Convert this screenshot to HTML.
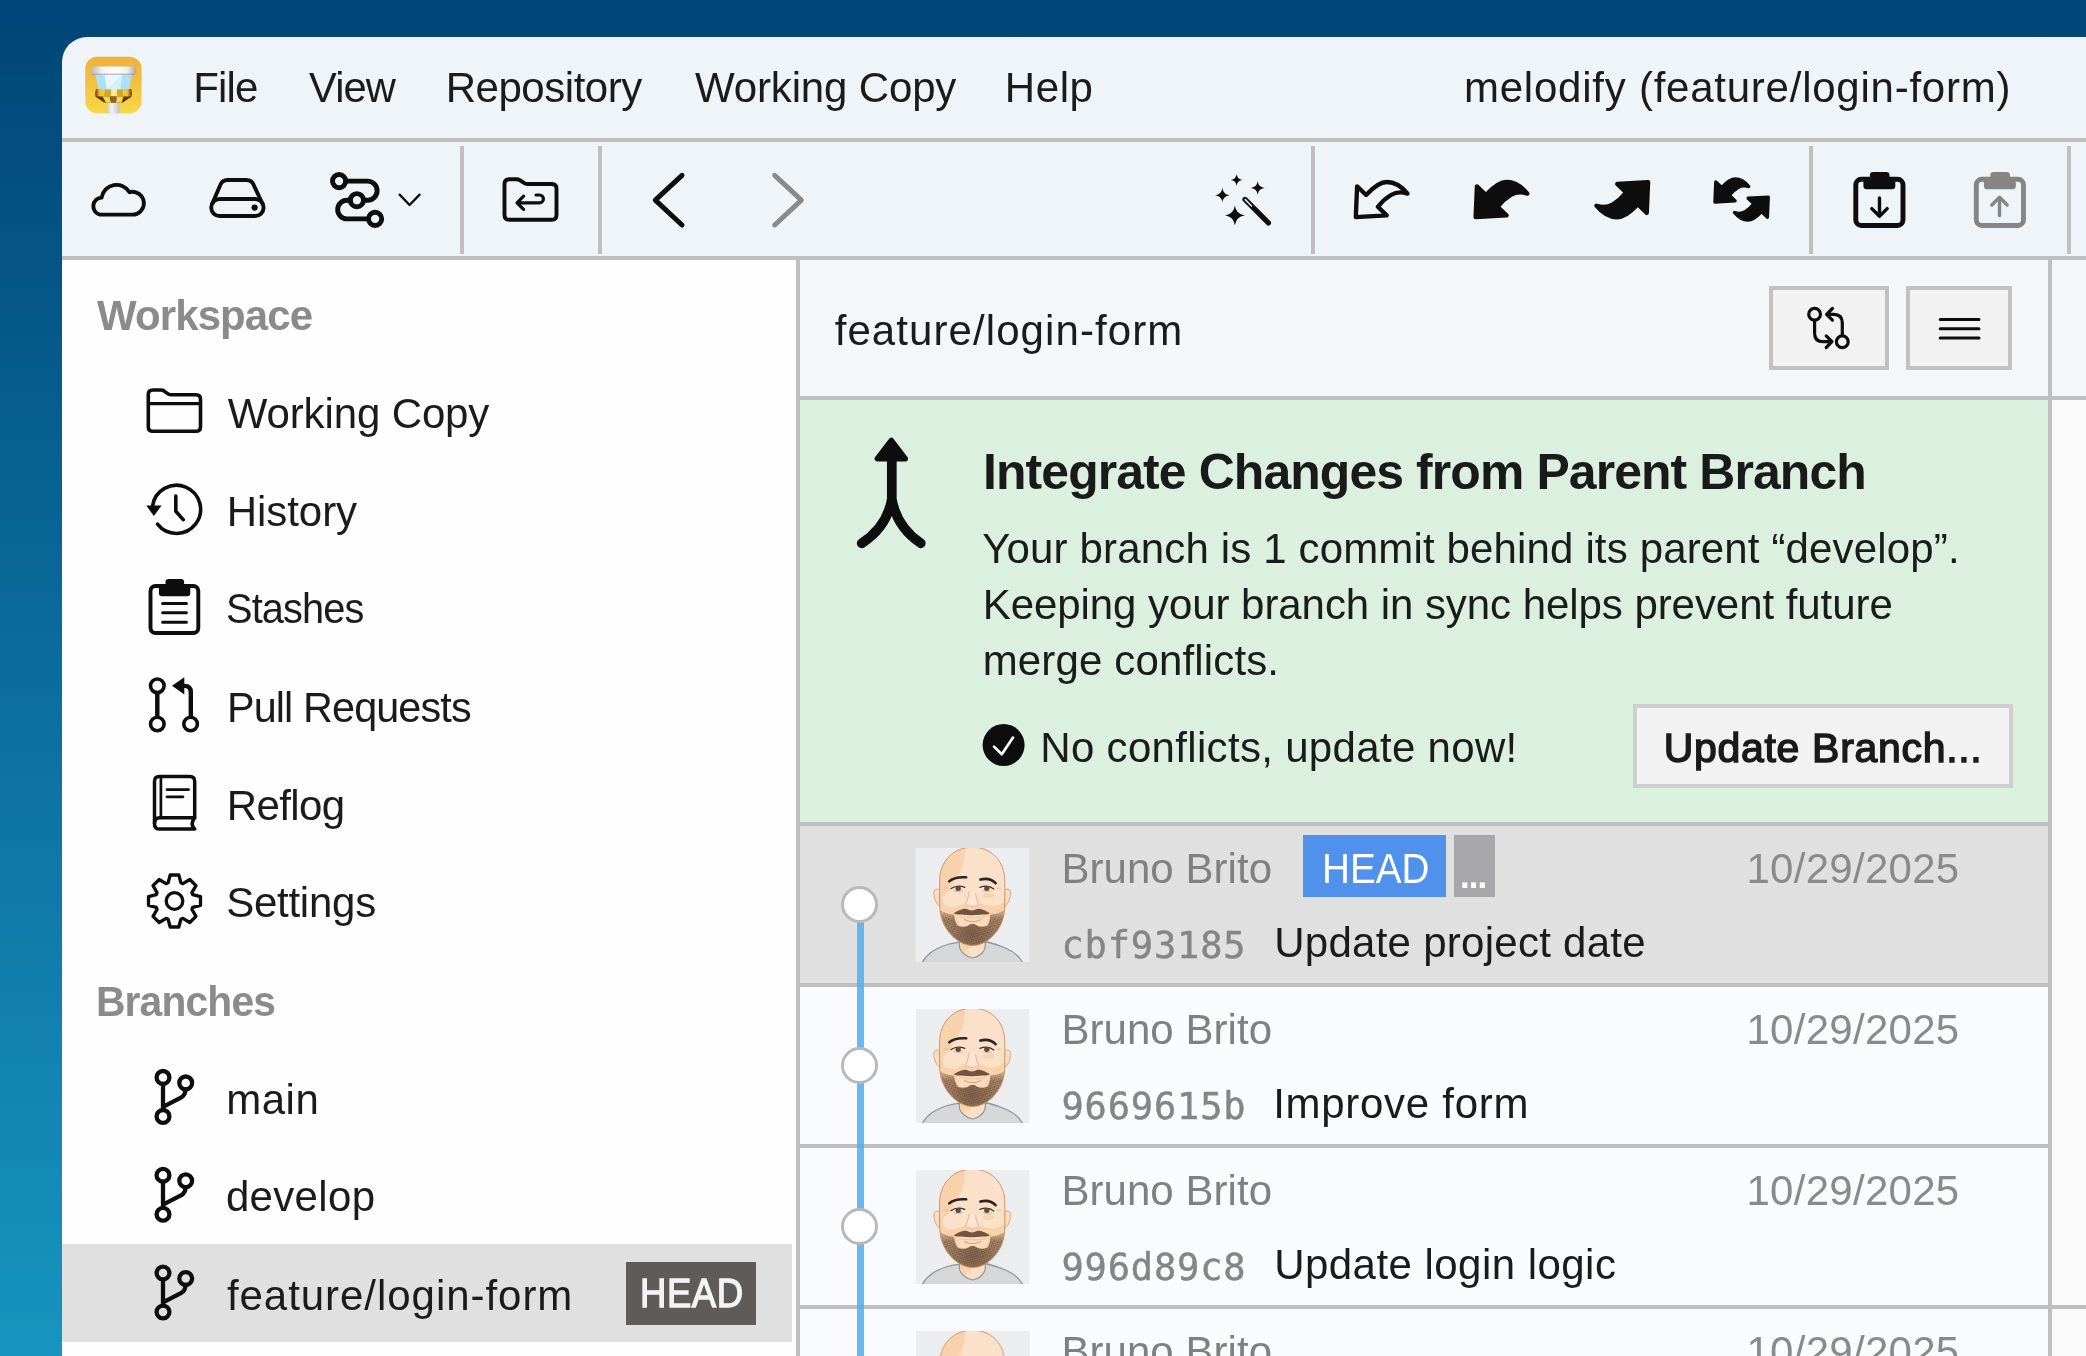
<!DOCTYPE html>
<html lang="en">
<head>
<meta charset="utf-8">
<title>Tower - melodify (feature/login-form)</title>
<style>
html,body{margin:0;padding:0;}
body{width:2086px;height:1356px;overflow:hidden;position:relative;background:linear-gradient(180deg,#00467a 0px,#004878 40px,#0a6a9b 620px,#1794bf 1356px);font-family:'Liberation Sans',sans-serif;color:#1b1b1b;}
#win{position:absolute;left:62px;top:37px;width:2100px;height:1400px;border-top-left-radius:25px;overflow:hidden;background:#eff4f8;}
#in{position:absolute;left:-62px;top:-37px;width:2086px;height:1356px;will-change:transform;}
.b{position:absolute;}
.ln{position:absolute;background:#bfbfbf;}
.t{position:absolute;white-space:pre;transform-origin:0 50%;}
svg{position:absolute;overflow:visible;}
.s{fill:none;stroke:#0d0d0d;stroke-linecap:round;stroke-linejoin:round;}
.f{fill:#0d0d0d;stroke:none;}
</style>
</head>
<body>
<div id="win"><div id="in">

<!-- panels -->
<div class="b" style="left:62px;top:260px;width:734px;height:1096px;background:#fefefe"></div>
<div class="b" style="left:62px;top:1244.2px;width:730.4px;height:97.4px;background:#e0e0e0"></div>
<div class="b" style="left:800px;top:260px;width:1286px;height:136px;background:#f5f6f8"></div>
<div class="b" style="left:800px;top:400px;width:1248px;height:422px;background:#dbf0de"></div>
<div class="b" style="left:2052px;top:400px;width:34px;height:956px;background:#fafafa"></div>
<!-- rows -->
<div class="b" style="left:800px;top:826px;width:1248px;height:157px;background:#e0e0e0"></div>
<div class="b" style="left:800px;top:987px;width:1248px;height:157px;background:#fafbfd"></div>
<div class="b" style="left:800px;top:1148px;width:1248px;height:157px;background:#fafbfd"></div>
<div class="b" style="left:800px;top:1309px;width:1248px;height:47px;background:#fafbfd"></div>
<!-- lines -->
<div class="ln" style="left:62px;top:138px;width:2024px;height:4px"></div>
<div class="ln" style="left:62px;top:256px;width:2024px;height:4px"></div>
<div class="ln" style="left:796px;top:260px;width:4px;height:1096px"></div>
<div class="ln" style="left:2048px;top:260px;width:4px;height:1096px"></div>
<div class="ln" style="left:800px;top:396px;width:1286px;height:4px"></div>
<div class="ln" style="left:800px;top:822px;width:1248px;height:4px"></div>
<div class="ln" style="left:800px;top:983px;width:1248px;height:4px"></div>
<div class="ln" style="left:800px;top:1144px;width:1248px;height:4px"></div>
<div class="ln" style="left:800px;top:1305px;width:1286px;height:4px"></div>
<!-- toolbar separators -->
<div class="ln" style="left:459.5px;top:146px;width:4px;height:107.5px"></div>
<div class="ln" style="left:597.5px;top:146px;width:4px;height:107.5px"></div>
<div class="ln" style="left:1310.7px;top:146px;width:4px;height:107.5px"></div>
<div class="ln" style="left:1808.6px;top:146px;width:4px;height:107.5px"></div>
<div class="ln" style="left:2066.6px;top:146px;width:4px;height:107.5px"></div>

<!-- header buttons -->
<div class="b" style="left:1768.5px;top:286px;width:112px;height:76px;border:4px solid #c1c1c1;background:#f2f2f2"></div>
<div class="b" style="left:1906.4px;top:286px;width:98px;height:76px;border:4px solid #c1c1c1;background:#f2f2f2"></div>
<!-- update button -->
<div class="b" style="left:1633px;top:704px;width:372px;height:76px;border:4px solid #cfcfcf;background:#f2f2f2"></div>
<!-- badges -->
<div class="b" style="left:626px;top:1262px;width:130px;height:63px;background:#5f5b59"></div>
<div class="b" style="left:1303px;top:835px;width:143px;height:62px;background:#5091eb"></div>
<div class="b" style="left:1453.5px;top:835px;width:41px;height:62px;background:#a8a8aa"></div>

<!-- graph line & nodes -->
<div class="b" style="left:857px;top:904px;width:7px;height:452px;background:rgba(84,170,236,.85)"></div>
<div class="b" style="left:841px;top:885.5px;width:31px;height:31px;border-radius:50%;border:3.5px solid #b9b9b9;background:#fff"></div>
<div class="b" style="left:841px;top:1046.5px;width:31px;height:31px;border-radius:50%;border:3.5px solid #b9b9b9;background:#fff"></div>
<div class="b" style="left:841px;top:1207.5px;width:31px;height:31px;border-radius:50%;border:3.5px solid #b9b9b9;background:#fff"></div>

<svg width="2086" height="1356" viewBox="0 0 2086 1356" style="left:0;top:0">
<defs><linearGradient id="gI" x1="0" y1="0" x2="0" y2="1"><stop offset="0" stop-color="#eeb03d"/><stop offset="1" stop-color="#f7d747"/></linearGradient><linearGradient id="gD" x1="0" y1="0" x2="1" y2="0"><stop offset="0" stop-color="#b9b9b9"/><stop offset=".25" stop-color="#f4f4f4"/><stop offset=".55" stop-color="#ffffff"/><stop offset=".8" stop-color="#efefef"/><stop offset="1" stop-color="#a9a9a9"/></linearGradient><linearGradient id="gS" x1="0" y1="0" x2="1" y2="0"><stop offset="0" stop-color="#c4c4c4"/><stop offset=".4" stop-color="#f2f2f2"/><stop offset="1" stop-color="#bdbdbd"/></linearGradient><linearGradient id="gG" x1="0" y1="0" x2="1" y2="0"><stop offset="0" stop-color="#6a2a08"/><stop offset=".12" stop-color="#f0b92c"/><stop offset=".3" stop-color="#f8d64a"/><stop offset=".5" stop-color="#fff0a0"/><stop offset=".7" stop-color="#f8d64a"/><stop offset=".88" stop-color="#f0b92c"/><stop offset="1" stop-color="#6a2a08"/></linearGradient></defs>
<g><rect x="85.2" y="56.8" width="56.4" height="56.5" rx="12" fill="url(#gI)"/><path d="M106.2,102 L120.2,102 L119,113.5 L107.8,113.5 Z" fill="url(#gS)"/><path d="M95.2,74 L132,74 L129,89.5 L98.8,89.5 Z" fill="#a9e1fb"/><path d="M104.5,74 L122.5,74 L120.5,89.5 L107,89.5 Z" fill="#d3f0fc"/><path d="M104.5,74 L122.5,74 L107,89.5 Z" fill="#e9f8fe"/><path d="M96,89 L131.3,89 Q132.5,93 131.5,96.5 L123,102.6 L104,102.6 L95.5,96.5 Q94.5,93 96,89 Z" fill="url(#gG)"/><path d="M95.5,96.5 L131.5,96.5 L123,102.6 L104,102.6 Z" fill="#3c1503" opacity=".8"/><path d="M102.5,96.5 L109.5,96.5 L111,102.6 L106,102.6 Z M116.5,96.5 L123.5,96.5 L121.5,102.6 L116,102.6 Z" fill="#f8d64a"/><path d="M110,96.5 L116.5,96.5 L116,102.6 L111,102.6 Z" fill="#8a6a12"/><path d="M105,89.5 L111,89.5 L111,96.5 L104,96.5 Z M117,89.5 L122.5,89.5 L123.5,96.5 L117,96.5 Z" fill="#c99a1c" opacity=".8"/><rect x="91.2" y="66.6" width="44.8" height="8.4" rx="3.6" fill="url(#gD)"/><rect x="92" y="73.6" width="43" height="1.4" fill="#8d8d8d" opacity=".55"/></g>
<path class="s" stroke-width="3.9" d="M100.1,214.6 H131.5 A11.4,11.4 0 1 0 129.6,192.2 A15.2,15.2 0 0 0 101.6,197.6 A8.6,8.6 0 0 0 100.1,214.6 Z"/>
<g class="s" stroke-width="3.9"><rect x="211.2" y="199" width="52.4" height="17" rx="8.5"/><path d="M212.4,203.5 L220.3,185 Q222.3,180 227.5,180 H246.5 Q251.7,180 253.7,185 L262.4,203.5"/></g><circle class="f" cx="254.6" cy="207.6" r="3.1"/>
<g class="s" stroke-width="4.9"><circle cx="339.1" cy="181.1" r="6.6"/><circle cx="356.9" cy="200.2" r="6.6"/><circle cx="375.1" cy="218.9" r="6.6"/><path d="M345.8,181.1 H367.6 A9.55,9.55 0 0 1 367.6,200.2 H363.6 M350.2,200.2 H347 A9.35,9.35 0 0 0 347,218.9 H368.4"/></g>
<path class="s" stroke-width="2.3" d="M399.6,194.6 L409.6,205 L419.6,194.6"/>
<g class="s"><path stroke-width="3.9" d="M504.5,184 Q504.5,179.2 509.3,179.2 H516.4 Q518.3,179.2 519.8,180.2 L524.3,183.2 Q525.6,184 527,184 H551.7 Q556.5,184 556.5,188.8 V215 Q556.5,219.8 551.7,219.8 H509.3 Q504.5,219.8 504.5,215 Z"/><path stroke-width="3.2" d="M518,202.8 H539.5 A3.9,3.9 0 0 0 539.5,195 H536 M523.6,196.2 L517,202.8 L523.6,209.4"/></g>
<path class="s" stroke-width="5" d="M682,175.3 L655.3,200.1 L682,225"/>
<path class="s" stroke-width="5" style="stroke:#8a8a8a" d="M774.7,175.3 L801.4,200.1 L774.7,225"/>
<g class="f"><path d="M1236.6,174.1 Q1237.2,179.4 1242.5,180 Q1237.2,180.6 1236.6,185.9 Q1236.0,180.6 1230.6999999999998,180 Q1236.0,179.4 1236.6,174.1 Z"/><path d="M1257.7,181.1 Q1258.4,187.2 1264.5,187.9 Q1258.4,188.6 1257.7,194.70000000000002 Q1257.0,188.6 1250.9,187.9 Q1257.0,187.2 1257.7,181.1 Z"/><path d="M1222.4,188.10000000000002 Q1223.2,194.5 1229.6000000000001,195.3 Q1223.2,196.1 1222.4,202.5 Q1221.6,196.1 1215.2,195.3 Q1221.6,194.5 1222.4,188.10000000000002 Z"/><path d="M1234.9,205.5 Q1236.0,214.3 1244.8000000000002,215.4 Q1236.0,216.5 1234.9,225.3 Q1233.8,216.5 1225.0,215.4 Q1233.8,214.3 1234.9,205.5 Z"/></g>
<path class="s" stroke-width="5.2" d="M1245,199.4 L1268.4,222.9"/><path d="M1245.3,199.7 L1251.5,206" stroke="#d9dde2" stroke-width="1.7" stroke-linecap="round"/>
<path d="M3.6,6.3 L12.6,15 C19.5,7.5 26.5,2 33.5,2 C42,2 49,7.5 54,13.6 C48,11.6 42.5,12 37.5,15 C32,18.3 27.5,22.8 24.3,26.8 L33.2,35.4 L2.3,37.1 Z" class="s" stroke-width="4.3" transform="translate(1353.5,180)"/>
<path d="M3.6,6.3 L12.6,15 C19.5,7.5 26.5,2 33.5,2 C42,2 49,7.5 54,13.6 C48,11.6 42.5,12 37.5,15 C32,18.3 27.5,22.8 24.3,26.8 L33.2,35.4 L2.3,37.1 Z" class="s" stroke-width="4.3" style="fill:#0d0d0d" transform="translate(1473.3,180)"/>
<path d="M3.6,6.3 L12.6,15 C19.5,7.5 26.5,2 33.5,2 C42,2 49,7.5 54,13.6 C48,11.6 42.5,12 37.5,15 C32,18.3 27.5,22.8 24.3,26.8 L33.2,35.4 L2.3,37.1 Z" class="s" stroke-width="4.3" style="fill:#0d0d0d" transform="translate(1650.4,219.3) rotate(180)"/>
<path d="M3.6,6.3 L12.6,15 C19.5,7.5 26.5,2 33.5,2 C42,2 49,7.5 54,13.6 C48,11.6 42.5,12 37.5,15 C32,18.3 27.5,22.8 24.3,26.8 L33.2,35.4 L2.3,37.1 Z" class="s" stroke-width="5" style="fill:#0d0d0d" transform="translate(1713.4,177.7) scale(.655)"/>
<path d="M3.6,6.3 L12.6,15 C19.5,7.5 26.5,2 33.5,2 C42,2 49,7.5 54,13.6 C48,11.6 42.5,12 37.5,15 C32,18.3 27.5,22.8 24.3,26.8 L33.2,35.4 L2.3,37.1 Z" class="s" stroke-width="5" style="fill:#0d0d0d" transform="translate(1769.8,221.4) rotate(180) scale(.655)"/>
<g transform="translate(0,0)" stroke="#0d0d0d" fill="none" stroke-linecap="round" stroke-linejoin="round"><rect x="1855.8" y="179.3" width="47.2" height="46.2" rx="5.5" stroke-width="4.9"/><path d="M1873,172.1 H1886.4 Q1889.5,172.1 1889.5,175.2 V177 H1892.3 Q1895.3,177 1895.3,180 V186 Q1895.3,189.3 1892,189.3 H1866.7 Q1863.4,189.3 1863.4,186 V180 Q1863.4,177 1866.4,177 H1869.9 V175.2 Q1869.9,172.1 1873,172.1 Z" fill="#0d0d0d" stroke="none"/><path stroke-width="3.4" d="M1879.5,198 V215.6 M1871.8,208.6 L1879.5,216.3 L1887.2,208.6"/></g>
<g transform="translate(120.5,0)" stroke="#858585" fill="none" stroke-linecap="round" stroke-linejoin="round"><rect x="1855.8" y="179.3" width="47.2" height="46.2" rx="5.5" stroke-width="4.9"/><path d="M1873,172.1 H1886.4 Q1889.5,172.1 1889.5,175.2 V177 H1892.3 Q1895.3,177 1895.3,180 V186 Q1895.3,189.3 1892,189.3 H1866.7 Q1863.4,189.3 1863.4,186 V180 Q1863.4,177 1866.4,177 H1869.9 V175.2 Q1869.9,172.1 1873,172.1 Z" fill="#858585" stroke="none"/><path stroke-width="3.4" d="M1879,215.6 V198.5 M1871.3,205 L1879,197.3 L1886.7,205"/></g>
<g class="s" stroke-width="3.6"><path d="M148.3,394.6 Q148.3,390 152.9,390 H160.7 Q162.6,390 164.2,391.1 L167.6,393.6 Q169,394.7 170.8,394.7 H195.9 Q200.5,394.7 200.5,399.3 V426.7 Q200.5,431.3 195.9,431.3 H152.9 Q148.3,431.3 148.3,426.7 Z"/><path d="M148.5,403.6 H200.5" stroke-width="3.1"/></g>
<g class="s" stroke-width="3.6"><path d="M152.6,506 A24.1,24.1 0 1 1 157.5,524.2"/><path d="M175.8,496 V511.2 L183.2,519.6"/></g><path class="f" d="M146.3,505.6 H161.6 L153.8,516 Z"/>
<g class="s"><rect x="150.5" y="586" width="47.8" height="47" rx="5" stroke-width="3.9"/><path stroke-width="3" d="M162.6,603.4 H186.4 M162.6,612.8 H186.4 M162.6,622.3 H186.4"/></g><path class="f" d="M168.5,578.9 H181.1 Q184.1,578.9 184.1,581.9 V584 H187.3 Q190.3,584 190.3,587 V593.2 Q190.3,596.2 187.3,596.2 H161.9 Q158.9,596.2 158.9,593.2 V587 Q158.9,584 161.9,584 H165.5 V581.9 Q165.5,578.9 168.5,578.9 Z"/>
<g class="s" stroke-width="3.6"><circle cx="157.3" cy="685.8" r="6.8"/><circle cx="157.3" cy="724" r="6.8"/><circle cx="190.6" cy="724" r="6.8"/><path stroke-width="4.4" d="M157.3,693.2 V716.6 M190.8,716.6 V692.2 Q190.8,685.9 184.5,685.9 H182"/></g><path class="f" d="M172,685.8 L184.3,677.2 V694.4 Z"/>
<g class="s" stroke-width="3.5"><path d="M194.7,817.8 V781.4 Q194.7,776.6 189.9,776.6 H159.3 Q154.5,776.6 154.5,781.4 V823.5"/><path d="M160.9,777 V817.8" stroke-width="2.7"/><path d="M194.7,817.8 H159.7 Q154.5,817.8 154.5,823.4 Q154.5,829.1 159.7,829.1 H194.8 Q189.6,823.6 194.7,817.8 Z"/><path stroke-width="2.7" d="M167,789.6 H188.6 M167,796.8 H183"/></g>
<path class="s" stroke-width="3.3" d="M168.1,882.8 L170.2,875.0 L178.8,875.0 L180.9,882.8 L182.9,883.6 L189.8,879.5 L196.0,885.7 L191.9,892.6 L192.7,894.6 L200.5,896.7 L200.5,905.3 L192.7,907.4 L191.9,909.4 L196.0,916.3 L189.8,922.5 L182.9,918.4 L180.9,919.2 L178.8,927.0 L170.2,927.0 L168.1,919.2 L166.1,918.4 L159.2,922.5 L153.0,916.3 L157.1,909.4 L156.3,907.4 L148.5,905.3 L148.5,896.7 L156.3,894.6 L157.1,892.6 L153.0,885.7 L159.2,879.5 L166.1,883.6 Z"/><circle class="s" stroke-width="3.3" cx="174.5" cy="901" r="8.3"/>
<g transform="translate(154.4,1069)" class="s" stroke-width="4.3"><circle cx="8.6" cy="8.4" r="6.4"/><circle cx="8.6" cy="47.4" r="6.4"/><circle cx="31.3" cy="13.9" r="6.4"/><path d="M8.6,14.8V41 M8.6,37.8 L26.5,28.6 Q31,26.3 31.2,20.3"/></g>
<g transform="translate(154.4,1166.8)" class="s" stroke-width="4.3"><circle cx="8.6" cy="8.4" r="6.4"/><circle cx="8.6" cy="47.4" r="6.4"/><circle cx="31.3" cy="13.9" r="6.4"/><path d="M8.6,14.8V41 M8.6,37.8 L26.5,28.6 Q31,26.3 31.2,20.3"/></g>
<g transform="translate(154.4,1264.6)" class="s" stroke-width="4.3"><circle cx="8.6" cy="8.4" r="6.4"/><circle cx="8.6" cy="47.4" r="6.4"/><circle cx="31.3" cy="13.9" r="6.4"/><path d="M8.6,14.8V41 M8.6,37.8 L26.5,28.6 Q31,26.3 31.2,20.3"/></g>
<g class="s" stroke-width="3.2"><circle cx="1814.6" cy="314.3" r="5.9"/><circle cx="1842.3" cy="341.7" r="5.9"/><path d="M1814.6,320.4 V333.2 Q1814.6,341.7 1823.1,341.7 H1831.6 M1826.2,335.9 L1832,341.7 L1826.2,347.5"/><path d="M1842.3,335.6 V322.8 Q1842.3,314.3 1833.8,314.3 H1827.2 M1832.4,308.5 L1826.6,314.3 L1832.4,320.1"/></g>
<path class="s" stroke-width="3" d="M1940.2,319.6 H1979 M1940.2,328.7 H1979 M1940.2,337.9 H1979"/>
<g class="s" stroke-width="9.7"><path d="M891.8,452 V504 M891.8,499 Q887,527 861.7,543.3 M891.8,499 Q896.6,527 920.8,543.3"/></g><path d="M891.3,440.3 L877.3,458.7 H905.3 Z" fill="#0d0d0d" stroke="#0d0d0d" stroke-width="5.4" stroke-linejoin="round"/>
<circle cx="1003.6" cy="745" r="21" fill="#0d0d0d"/><path d="M994,746.6 L1001.8,754.2 L1013,737.6" fill="none" stroke="#fff" stroke-width="2.7" stroke-linecap="round" stroke-linejoin="round"/>
</svg>
<svg width="2086" height="1356" viewBox="0 0 2086 1356" style="left:0;top:0">
<defs>
<pattern id="stb" width="3.1" height="3.1" patternUnits="userSpaceOnUse" patternTransform="rotate(28)"><rect width="3.1" height="3.1" fill="#a98565"/><circle cx="0.8" cy="0.8" r="0.72" fill="#6f5342"/><circle cx="2.4" cy="2.3" r="0.65" fill="#7d5f4c"/></pattern>
<linearGradient id="bfd" x1="0" y1="0" x2="0" y2="1"><stop offset="0" stop-color="#f8d2ab" stop-opacity=".75"/><stop offset=".28" stop-color="#f8d2ab" stop-opacity="0"/></linearGradient>
<radialGradient id="bdk" cx="57" cy="86" r="26" gradientUnits="userSpaceOnUse"><stop offset="0" stop-color="#5e4535" stop-opacity=".55"/><stop offset="1" stop-color="#5e4535" stop-opacity="0"/></radialGradient>
<clipPath id="avc"><rect x="0" y="0" width="114" height="114"/></clipPath>
<g id="av" clip-path="url(#avc)">
<rect width="114" height="114" fill="#ebedef"/>
<path d="M6.5,115 C9,110 12.5,106.5 17,103.3 C22,100 28,97.8 32,96.5 C36,95.3 39,94.8 42.5,94.3 L72,94 C78,95.5 84,97.5 91,100.5 C99,104 104,108.5 107.5,115 Z" fill="#d6d7d8" stroke="#8d969d" stroke-width="1.3"/>
<path d="M43.9,90 L43.9,98 C44.3,103.5 50,108.5 57.2,110 C64,108.5 69.3,104 69.8,98 L69.8,90 Z" fill="#fbdfc6" stroke="#8d969d" stroke-width="1.2"/>
<path d="M44.6,94 L44.6,98 C45,101 47,103.5 49,105 C50.5,101 56,98.5 63,97 L63,94 Z" fill="#f8d2ab"/>
<path d="M24.6,42.5 C22.5,40.2 18.6,40.6 18.3,44.5 C18.2,49.5 20.4,55.5 24.2,58.6 Z" fill="#fbdcc0" stroke="#d9a074" stroke-width=".9"/>
<path d="M88.9,42.5 C91,40.2 94.9,40.6 95.2,44.5 C95.3,49.5 93.1,55.5 89.3,58.6 Z" fill="#fbdcc0" stroke="#d9a074" stroke-width=".9"/>
<path d="M57,-0.8 C38,-0.8 24.2,13 24.1,33 C24,42 24,52 24.4,61 C25.2,72 30,82 38.5,89.5 C44.5,94.8 50.5,97.4 57.1,97.4 C63.7,97.4 69.7,94.8 75.6,89.5 C84,82 88.5,72 89.1,61 C89.5,52 89.4,42 89.3,33 C89.2,13 76,-0.8 57,-0.8 Z" fill="#fbe1ca"/>
<clipPath id="hdc"><path d="M57,-0.8 C38,-0.8 24.2,13 24.1,33 C24,42 24,52 24.4,61 C25.2,72 30,82 38.5,89.5 C44.5,94.8 50.5,97.4 57.1,97.4 C63.7,97.4 69.7,94.8 75.6,89.5 C84,82 88.5,72 89.1,61 C89.5,52 89.4,42 89.3,33 C89.2,13 76,-0.8 57,-0.8 Z"/></clipPath>
<g clip-path="url(#hdc)">
<path d="M20,-2 L49,-2 C50.5,8 48,18 43.5,25 C40,30.5 37,35 35.5,41 L30,46 L20,50 Z" fill="#f8d2ab"/>
<path d="M20,44 C26,43 29,45 31,48 C28,52 27,56 31,58.5 C36,60 43,59 48,56 L51.5,57.5 C53,59.5 61,59.5 62.5,57.5 L66,55.5 C72,59 82,59.5 88,54 L95,50 L95,100 L20,100 Z" fill="#f8d2ab"/>
<ellipse cx="37" cy="51.2" rx="10.2" ry="7.2" fill="#fbe1ca"/>
<ellipse cx="73" cy="47.5" rx="6" ry="2.6" fill="#f6cfa6" opacity=".8"/>
<path d="M22,60.5 C27,64.5 33,66.5 38.5,66.8 C39,71 40,74.5 42,77.5 C46,79.5 50,79 53,77.5 C55,75.6 59,75.6 61.2,77.5 C64,79 68,79.5 72.2,77.5 C74,74.5 74.8,71 74.6,66.8 C80,66.5 86,64.5 92,60.5 L92,100 L22,100 Z" fill="url(#stb)"/>
<path d="M22,60.5 C27,64.5 33,66.5 38.5,66.8 C39,71 40,74.5 42,77.5 C46,79.5 50,79 53,77.5 C55,75.6 59,75.6 61.2,77.5 C64,79 68,79.5 72.2,77.5 C74,74.5 74.8,71 74.6,66.8 C80,66.5 86,64.5 92,60.5 L92,100 L22,100 Z" fill="url(#bfd)"/>
<path d="M22,60.5 C27,64.5 33,66.5 38.5,66.8 C39,71 40,74.5 42,77.5 C46,79.5 50,79 53,77.5 C55,75.6 59,75.6 61.2,77.5 C64,79 68,79.5 72.2,77.5 C74,74.5 74.8,71 74.6,66.8 C80,66.5 86,64.5 92,60.5 L92,100 L22,100 Z" fill="url(#bdk)"/>
</g>
<path d="M57,-0.8 C38,-0.8 24.2,13 24.1,33 C24,42 24,52 24.4,61 C25.2,72 30,82 38.5,89.5 C44.5,94.8 50.5,97.4 57.1,97.4 C63.7,97.4 69.7,94.8 75.6,89.5 C84,82 88.5,72 89.1,61 C89.5,52 89.4,42 89.3,33 C89.2,13 76,-0.8 57,-0.8 Z" fill="none" stroke="#c98e63" stroke-width=".9"/>
<path d="M41.5,66.6 C47,68 67,68 72.8,66.6 C72.5,71 71.5,74.5 70,77 C66,78.5 62.5,77.8 60.8,76.6 C58.5,75 55.5,75 53.3,76.6 C51.5,77.8 48,78.5 44.3,77 C42.8,74.5 41.8,71 41.5,66.6 Z" fill="#fbdcc0"/>
<path d="M43.5,68.2 C50,70.2 64,70.2 70.8,68.2" fill="none" stroke="#f4c9a0" stroke-width="1.6"/>
<path d="M48.8,71.4 C53,74.4 61,74.4 65.4,71.4" fill="none" stroke="#c98e63" stroke-width=".8" stroke-linecap="round"/>
<path d="M38,65.3 C41,63.8 45,61.2 48.8,60.8 C52,60.5 54,62.6 56.4,62.6 C58.8,62.6 60.8,60.5 64,60.8 C67.8,61.2 71.5,63.8 74.6,65.3 C72,66.8 69,66.6 66.5,66.4 C60,67.4 52.5,67.4 46,66.4 C43.5,66.6 40.5,66.8 38,65.3 Z" fill="#6e5443"/>
<path d="M53.6,43.5 C53.4,48 51.6,52.5 50.3,55.3 C49.5,57.3 51.4,58.3 53.5,57.7 C55.8,58.7 58.2,58.7 60.4,57.7 C62.4,58.3 63.9,57 62.9,55.2 C61.2,52 60.3,48.5 60.2,45" fill="#fce5d2" stroke="#dfa880" stroke-width=".8" stroke-linejoin="round"/>
<path d="M33.7,33.4 C37,30.2 41.5,28.7 50.7,29.3" fill="none" stroke="#2b2422" stroke-width="2.6" stroke-linecap="round"/>
<path d="M64.9,31.6 C71,29.9 76.5,31.3 80.1,35.2" fill="none" stroke="#2b2422" stroke-width="2.6" stroke-linecap="round"/>
<path d="M35.6,40.6 C39.5,37.7 45,37.6 49.3,39.3" fill="none" stroke="#3a2f2b" stroke-width="1.25" stroke-linecap="round"/>
<path d="M64.4,39.3 C69,37.6 74.5,37.9 78.3,40.9" fill="none" stroke="#3a2f2b" stroke-width="1.25" stroke-linecap="round"/>
<ellipse cx="42.7" cy="40.6" rx="2.7" ry="2.5" fill="#5b4a44"/><ellipse cx="71.3" cy="40.6" rx="2.7" ry="2.5" fill="#5b4a44"/>
<path d="M38,42.6 C41,44.2 45,44 47.5,42.4 M67,42.4 C70,44 74.5,44.2 77,42.8" fill="none" stroke="#d9a983" stroke-width=".7"/>
<path d="M28,39.6 L32.5,40.5 M81.5,40.6 L85.5,39.8" fill="none" stroke="#dcae8a" stroke-width=".7"/>
</g>
</defs>
<use href="#av" x="915.5" y="848"/>
<use href="#av" x="915.5" y="1009"/>
<use href="#av" x="915.5" y="1170"/>
<use href="#av" x="915.5" y="1331"/>
</svg>

<span class="t" style="left:193.3px;top:66.7px;font-size:42px;line-height:42px;letter-spacing:-0.87px;">File</span>
<span class="t" style="left:308.7px;top:66.7px;font-size:42px;line-height:42px;letter-spacing:-0.90px;transform:scaleX(0.9920);">View</span>
<span class="t" style="left:445.7px;top:66.7px;font-size:42px;line-height:42px;letter-spacing:-0.46px;">Repository</span>
<span class="t" style="left:695.0px;top:66.7px;font-size:42px;line-height:42px;letter-spacing:-0.15px;">Working Copy</span>
<span class="t" style="left:1004.7px;top:66.7px;font-size:42px;line-height:42px;letter-spacing:0.63px;">Help</span>
<span class="t" style="left:1464.0px;top:66.9px;font-size:42px;line-height:42px;letter-spacing:0.76px;">melodify (feature/login-form)</span>
<span class="t" style="left:97.3px;top:294.0px;font-size:43px;line-height:43px;font-weight:700;color:#8b8b8b;letter-spacing:-0.90px;transform:scaleX(0.9759);">Workspace</span>
<span class="t" style="left:227.7px;top:392.7px;font-size:42px;line-height:42px;letter-spacing:-0.12px;">Working Copy</span>
<span class="t" style="left:226.8px;top:490.7px;font-size:42px;line-height:42px;letter-spacing:-0.07px;">History</span>
<span class="t" style="left:226.3px;top:588.2px;font-size:42px;line-height:42px;letter-spacing:-0.90px;transform:scaleX(0.9460);">Stashes</span>
<span class="t" style="left:226.8px;top:686.7px;font-size:42px;line-height:42px;letter-spacing:-0.90px;transform:scaleX(0.9848);">Pull Requests</span>
<span class="t" style="left:226.8px;top:784.6px;font-size:42px;line-height:42px;letter-spacing:-0.62px;">Reflog</span>
<span class="t" style="left:226.2px;top:882.2px;font-size:42px;line-height:42px;letter-spacing:-0.26px;">Settings</span>
<span class="t" style="left:95.8px;top:979.6px;font-size:43px;line-height:43px;font-weight:700;color:#8b8b8b;letter-spacing:-0.90px;transform:scaleX(0.9486);">Branches</span>
<span class="t" style="left:226.2px;top:1078.7px;font-size:42px;line-height:42px;letter-spacing:0.53px;">main</span>
<span class="t" style="left:225.9px;top:1176.4px;font-size:42px;line-height:42px;letter-spacing:0.33px;">develop</span>
<span class="t" style="left:226.9px;top:1274.8px;font-size:42px;line-height:42px;letter-spacing:0.96px;">feature/login-form</span>
<span class="t" style="left:639.7px;top:1272.8px;font-size:40px;line-height:40px;color:#f4f4f4;letter-spacing:0.60px;transform:scaleX(0.9127);-webkit-text-stroke:1.3px;">HEAD</span>
<span class="t" style="left:834.7px;top:309.5px;font-size:42px;line-height:42px;letter-spacing:1.08px;">feature/login-form</span>
<span class="t" style="left:983.1px;top:447.0px;font-size:50px;line-height:50px;font-weight:700;color:#1a1a1a;letter-spacing:-0.90px;transform:scaleX(0.9982);">Integrate Changes from Parent Branch</span>
<span class="t" style="left:982.3px;top:527.5px;font-size:42px;line-height:42px;letter-spacing:0.15px;">Your branch is 1 commit behind its parent “develop”.</span>
<span class="t" style="left:982.7px;top:583.8px;font-size:42px;line-height:42px;letter-spacing:-0.06px;">Keeping your branch in sync helps prevent future</span>
<span class="t" style="left:982.7px;top:639.6px;font-size:42px;line-height:42px;letter-spacing:0.15px;">merge conflicts.</span>
<span class="t" style="left:1040.3px;top:726.8px;font-size:42px;line-height:42px;letter-spacing:0.32px;">No conflicts, update now!</span>
<span class="t" style="left:1663.7px;top:727.9px;font-size:41px;line-height:41px;color:#1a1a1a;letter-spacing:0.69px;-webkit-text-stroke:1.45px;">Update Branch...</span>
<span class="t" style="left:1061.4px;top:847.9px;font-size:42px;line-height:42px;color:#808080;letter-spacing:0.06px;">Bruno Brito</span>
<span class="t" style="left:1746.4px;top:847.9px;font-size:42px;line-height:42px;color:#8a8a8a;letter-spacing:0.29px;">10/29/2025</span>
<span class="t" style="left:1061.4px;top:927.0px;font-size:37px;line-height:37px;color:#858585;font-family:'DejaVu Sans Mono', 'Liberation Mono', monospace;letter-spacing:0.86px;-webkit-text-stroke:0.45px;">cbf93185</span>
<span class="t" style="left:1274.2px;top:921.7px;font-size:42px;line-height:42px;letter-spacing:0.27px;">Update project date</span>
<span class="t" style="left:1061.4px;top:1008.9px;font-size:42px;line-height:42px;color:#808080;letter-spacing:0.06px;">Bruno Brito</span>
<span class="t" style="left:1746.4px;top:1008.9px;font-size:42px;line-height:42px;color:#8a8a8a;letter-spacing:0.29px;">10/29/2025</span>
<span class="t" style="left:1061.4px;top:1088.0px;font-size:37px;line-height:37px;color:#858585;font-family:'DejaVu Sans Mono', 'Liberation Mono', monospace;letter-spacing:0.86px;-webkit-text-stroke:0.45px;">9669615b</span>
<span class="t" style="left:1273.2px;top:1082.7px;font-size:42px;line-height:42px;letter-spacing:0.71px;">Improve form</span>
<span class="t" style="left:1061.4px;top:1169.9px;font-size:42px;line-height:42px;color:#808080;letter-spacing:0.06px;">Bruno Brito</span>
<span class="t" style="left:1746.4px;top:1169.9px;font-size:42px;line-height:42px;color:#8a8a8a;letter-spacing:0.29px;">10/29/2025</span>
<span class="t" style="left:1061.4px;top:1249.0px;font-size:37px;line-height:37px;color:#858585;font-family:'DejaVu Sans Mono', 'Liberation Mono', monospace;letter-spacing:0.86px;-webkit-text-stroke:0.45px;">996d89c8</span>
<span class="t" style="left:1274.2px;top:1243.7px;font-size:42px;line-height:42px;letter-spacing:0.46px;">Update login logic</span>
<span class="t" style="left:1061.4px;top:1330.9px;font-size:42px;line-height:42px;color:#808080;letter-spacing:0.06px;">Bruno Brito</span>
<span class="t" style="left:1746.4px;top:1330.9px;font-size:42px;line-height:42px;color:#8a8a8a;letter-spacing:0.29px;">10/29/2025</span>
<span class="t" style="left:1321.5px;top:848.3px;font-size:42px;line-height:42px;color:#ffffff;transform:scaleX(0.9205);">HEAD</span>
<span class="t" style="left:1460.4px;top:858.0px;font-size:36px;line-height:36px;font-weight:700;color:#ffffff;letter-spacing:-0.90px;transform:scaleX(0.9669);">...</span>

</div></div>
</body>
</html>
